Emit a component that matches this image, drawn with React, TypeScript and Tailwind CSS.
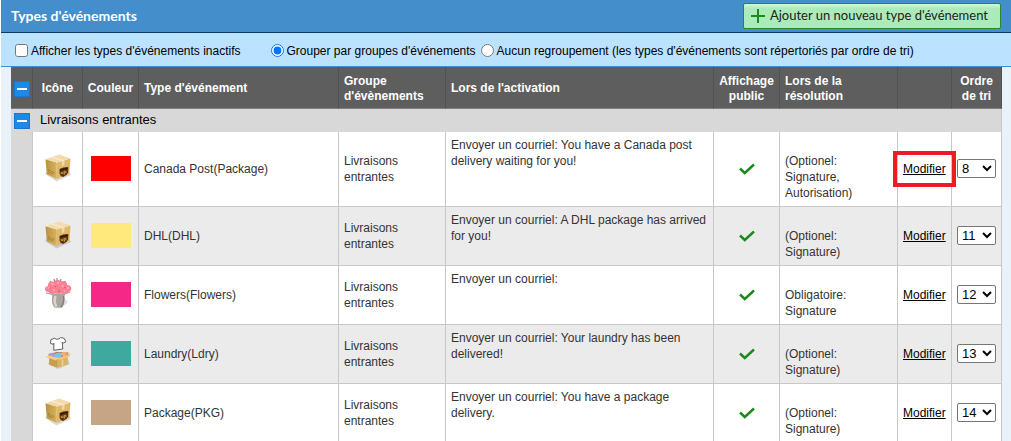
type EventType = {
    name: string;
    icon: 'package' | 'flowers' | 'laundry';
    color: string;
    activation: string;
    resolution: string[];
    order: number;
    highlighted?: boolean;
};

const eventTypes: EventType[] = [
    {
        name: 'Canada Post(Package)',
        icon: 'package',
        color: 'bg-[#ff0000]',
        activation: 'You have a Canada post delivery waiting for you!',
        resolution: ['(Optionel:', 'Signature,', 'Autorisation)'],
        order: 8,
        highlighted: true,
    },
    {
        name: 'DHL(DHL)',
        icon: 'package',
        color: 'bg-[#ffe87c]',
        activation: 'A DHL package has arrived for you!',
        resolution: ['(Optionel:', 'Signature)'],
        order: 11,
    },
    {
        name: 'Flowers(Flowers)',
        icon: 'flowers',
        color: 'bg-[#f52887]',
        activation: '',
        resolution: ['Obligatoire:', 'Signature'],
        order: 12,
    },
    {
        name: 'Laundry(Ldry)',
        icon: 'laundry',
        color: 'bg-[#3ea99f]',
        activation: 'Your laundry has been delivered!',
        resolution: ['(Optionel:', 'Signature)'],
        order: 13,
    },
    {
        name: 'Package(PKG)',
        icon: 'package',
        color: 'bg-[#c5a585]',
        activation: 'You have a package delivery.',
        resolution: ['(Optionel:', 'Signature)'],
        order: 14,
    },
];

const orders = [8, 11, 12, 13, 14];

function PackageIcon() {
    return (
        <svg className="block mx-auto" width="28" height="28" viewBox="0 0 28 28" aria-hidden="true">
            <defs>
                <linearGradient id="box-left" x1="0" x2="1">
                    <stop offset="0" stopColor="#b8923f" />
                    <stop offset="1" stopColor="#dab25c" />
                </linearGradient>
            </defs>
            <path d="M1 20 12.500 27.500 27 21 25 17 3 17z" fill="#000" opacity="0.14" />
            <path d="M1.500 5.300 12.800 8.600 12.600 25 2.800 20.300z" fill="url(#box-left)" />
            <path d="M12.800 8.600 26.500 4.600 25.300 20 12.600 25z" fill="#dfb968" />
            <path d="M1.500 5.300 15.300 0.600 26.500 4.600 12.800 8.600z" fill="#f3dbae" />
            <path d="M6.500 3.600 18 7.100 17.800 12 20.300 11.300 20.600 6.300 9 2.700z" fill="#fbefd6" opacity="0.6" />
            <path d="M4 15.500 6.500 16.700M7.500 17.200 10.500 18.700M4.200 17.500 9.500 20.200" stroke="#96732f" strokeWidth="0.7" />
            <path d="M15.500 15Q19.500 12.800 24.300 13L24.100 18.500Q23 21.500 19 23 16 22 15.600 19.500z" fill="#53320f" />
            <path d="M16.300 15.600Q19.500 13.700 23.500 13.900L23.400 15Q19.500 15 16.300 17z" fill="#2c170a" />
            <path d="M17.200 18v1.300q.8 1 1.700 0V17.600M20.200 21v-3.700q2.200-.4 2 .9-.4 1.100-2 1.100" stroke="#e2a247" strokeWidth="0.9" fill="none" />
        </svg>
    );
}

function FlowersIcon() {
    return (
        <svg className="block mx-auto" width="28" height="32" viewBox="0 0 28 32" aria-hidden="true">
            <path d="M9 28Q14 33 20 28L24 24 20 20z" fill="#000" opacity="0.12" />
            <path d="M6 3 9 7M10 1 11 5M13 0V5M17 1 15.500 6M21.500 3 18 8" stroke="#8b8f88" strokeWidth="1.200" />
            <path d="M2 15 9 16.500M26 14 19 16.500" stroke="#9a9f94" strokeWidth="1.200" />
            <path d="M7.500 15.500H21.500Q19.800 18 20.800 21 20.800 26 18 29.500H10.500Q7.500 26 7.900 21 9 18 7.500 15.500z" fill="#aaa69f" />
            <path d="M11.500 18Q9.500 24 12.500 28.500" stroke="#d8d5cf" strokeWidth="2.500" fill="none" />
            <path d="M19.500 18Q20.500 25 17 29" stroke="#827e77" strokeWidth="1.200" fill="none" />
            <g fill="#fa7f92">
                <ellipse cx="4.500" cy="11" rx="3.500" ry="3" />
                <ellipse cx="8" cy="7" rx="4" ry="3.500" />
                <ellipse cx="13.500" cy="5.500" rx="4" ry="3.500" />
                <ellipse cx="19" cy="6.500" rx="4" ry="3.500" />
                <ellipse cx="23.500" cy="10.500" rx="3.700" ry="3.500" />
                <ellipse cx="8.500" cy="12.500" rx="4" ry="3.500" />
                <ellipse cx="14.500" cy="11" rx="5" ry="5" />
                <ellipse cx="20" cy="13" rx="4" ry="3" />
            </g>
            <g fill="#fda9b5">
                <circle cx="4.500" cy="10" r="1.100" />
                <circle cx="8.500" cy="6" r="1.200" />
                <circle cx="14" cy="5" r="1.100" />
                <circle cx="18.500" cy="8" r="1.200" />
                <circle cx="24" cy="10" r="1.200" />
                <circle cx="10" cy="12" r="1.100" />
                <circle cx="20.500" cy="13" r="1" />
            </g>
            <g fill="#dc5d75">
                <circle cx="6.500" cy="10" r="0.800" />
                <circle cx="11.500" cy="8.500" r="0.800" />
                <circle cx="15" cy="13" r="0.900" />
                <circle cx="21" cy="9.500" r="0.800" />
            </g>
        </svg>
    );
}

function LaundryIcon() {
    return (
        <svg className="block mx-auto" width="28" height="32" viewBox="0 0 28 32" aria-hidden="true">
            <path d="M3 26 13.500 32 26 27 24 22z" fill="#000" opacity="0.14" />
            <path
                d="M10.500 1.200 12.500 2.300 15 1.900 16.500 0.600 20.200 1.300 21.800 4.800 19.300 6 18.200 5.200 18.800 12 9.800 13.300 9.900 6.300 9.200 7.300 6.500 6.300 6.900 2.600z"
                fill="#fff"
                stroke="#4d4d4d"
                strokeWidth="0.900"
                strokeLinejoin="round"
            />
            <path d="M4.500 17 13 15 24.500 15.500 23 20H5z" fill="#a47a35" />
            <path d="M4.500 17.500q4-4 9 1l-2 2.500H6z" fill="#b59adb" />
            <path d="M10.500 17.500q4-3.500 8-.5l-2 4h-5z" fill="#79c3ee" />
            <path d="M16.500 16.500q3.500-3 7-.500L20 20.500z" fill="#f2ab80" />
            <path d="M5 20.500 13.800 22 13.700 30.500 5.300 28z" fill="#c99d4c" />
            <path d="M13.800 22 23.700 19.500V27.500L13.700 30.500z" fill="#dcb260" />
            <path d="M4.500 18.500 14.500 21 12 23.500 1.500 20z" fill="#efcd89" />
            <path d="M14.500 21 22 18.200 26.800 16 25 20 16 23z" fill="#ebc67c" />
            <path d="M18.500 22.500v6.500" stroke="#f0d59b" strokeWidth="1.500" />
        </svg>
    );
}

const icons = {
    package: PackageIcon,
    flowers: FlowersIcon,
    laundry: LaundryIcon,
};

function CollapseButton({ label }: { label: string }) {
    return (
        <button
            type="button"
            aria-label={label}
            className="grid place-items-center mx-auto size-4 border border-[#1976d2] bg-[#1e88e5]"
        >
            <span className="h-0.5 w-2.5 bg-white" />
        </button>
    );
}

function EventRow({ event }: { event: EventType }) {
    const Icon = icons[event.icon];

    return (
        <tr className="bg-white even:bg-[#ebebeb] [&>td]:border-r [&>td]:border-b [&>td]:border-[#c8c8c8] [&>td]:px-[5px] [&>td]:py-[5px]">
            <td className="border-b-[#d8d8d8]! bg-[#d8d8d8]" />
            <td className="pb-[7px]!">
                <Icon />
            </td>
            <td className="pb-[7px]!">
                <div className={`mx-auto h-[25px] w-10 ${event.color}`} />
            </td>
            <td>{event.name}</td>
            <td>
                Livraisons
                <br />
                entrantes
            </td>
            <td className="align-top">{`Envoyer un courriel: ${event.activation}`}</td>
            <td>
                <svg className="block mx-auto" width="16" height="12" viewBox="0 0 16 12" role="img" aria-label="Oui">
                    <path d="M1 5.500 5.800 10 15 1.500" fill="none" stroke="#1a8a1a" strokeWidth="2.400" />
                </svg>
            </td>
            <td>
                <br />
                {event.resolution.map((line) => (
                    <div key={line}>{line}</div>
                ))}
            </td>
            <td className="relative">
                {event.highlighted && (
                    <div className="absolute -inset-x-[5px] top-1/2 h-9 -translate-y-1/2 border-4 border-[#ed1c24]" />
                )}
                <a href="#modifier" className="text-black underline">
                    Modifier
                </a>
            </td>
            <td className="pb-[7px]!">
                <select
                    aria-label={`Ordre de tri ${event.name}`}
                    defaultValue={event.order}
                    className="block h-[19px] w-[39px] rounded-xs border border-[#767676] bg-white text-[13px] leading-4 text-black"
                >
                    {orders.map((order) => (
                        <option key={order}>{order}</option>
                    ))}
                </select>
            </td>
        </tr>
    );
}

function App() {
    return (
        <div className="min-h-screen ml-px bg-[#e9f1f9] font-['Liberation_Sans',Arial,sans-serif] text-xs text-[#333]">
            <header className="flex items-center justify-between h-[33px] border-b border-[#0b3c68] bg-[#448ecc] px-2.5 font-[Lato,sans-serif]">
                <h1 className="text-sm font-bold text-white">Types d'événements</h1>
                <button
                    type="button"
                    className="flex items-center gap-[5px] h-[26px] rounded-xs border border-[#2a8a2a] bg-linear-to-b from-[#d4f7da] to-[#abebb9] to-20% pl-[7px] pr-3 text-[13px] text-[#222]"
                >
                    <svg width="14" height="14" viewBox="0 0 14 14" aria-hidden="true">
                        <path d="M7 0V14M0 7H14" stroke="#1a8a1a" strokeWidth="2" />
                    </svg>
                    Ajouter un nouveau type d'événement
                </button>
            </header>

            <div className="flex items-center h-[34px] border-b border-[#448ecc] bg-[#bbe2ff] pt-0.5 pl-3.5 text-black">
                <label className="flex items-center gap-[3px] mr-[30px]">
                    <input type="checkbox" className="size-[13px]" />
                    Afficher les types d'événements inactifs
                </label>
                <label className="flex items-center gap-[3px] mr-[5px]">
                    <input type="radio" name="grouping" className="size-[13px]" defaultChecked />
                    Grouper par groupes d'événements
                </label>
                <label className="flex items-center gap-[3px]">
                    <input type="radio" name="grouping" className="size-[13px]" />
                    Aucun regroupement (les types d'événements sont répertoriés par ordre de tri)
                </label>
            </div>

            <main className="pl-2.5 pr-[9px]">
                <table className="w-full table-fixed border-separate border-spacing-0">
                    <colgroup>
                        <col className="w-[22px]" />
                        <col className="w-[50px]" />
                        <col className="w-[56px]" />
                        <col className="w-[200px]" />
                        <col className="w-[107px]" />
                        <col />
                        <col className="w-[66px]" />
                        <col className="w-[118px]" />
                        <col className="w-[54px]" />
                        <col className="w-[50px]" />
                    </colgroup>
                    <thead>
                        <tr className="h-[42px] bg-[#5e5e5e] text-left leading-[15px] text-white [&>th]:border-r [&>th]:border-b [&>th]:border-r-[#525252] [&>th]:border-b-[#808080] [&>th]:pt-0.5">
                            <th>
                                <CollapseButton label="Réduire tout" />
                            </th>
                            <th className="text-center">Icône</th>
                            <th className="text-center">Couleur</th>
                            <th className="px-[5px]">Type d'événement</th>
                            <th className="px-[5px]">Groupe d'évènements</th>
                            <th className="px-[5px]">Lors de l'activation</th>
                            <th className="text-center">Affichage public</th>
                            <th className="px-[5px]">
                                Lors de la
                                <br />
                                résolution
                            </th>
                            <th />
                            <th className="px-[5px] text-center">Ordre de tri</th>
                        </tr>
                        <tr className="h-[23px] bg-[#d8d8d8] text-left text-[13px] leading-4 text-black">
                            <td>
                                <CollapseButton label="Réduire Livraisons entrantes" />
                            </td>
                            <th colSpan={9} className="border-r border-[#c8c8c8] pb-0.5 pl-[7px] font-normal">
                                Livraisons entrantes
                            </th>
                        </tr>
                    </thead>
                    <tbody>
                        {eventTypes.map((event) => (
                            <EventRow key={event.name} event={event} />
                        ))}
                    </tbody>
                </table>
            </main>
        </div>
    );
}

export default App;
